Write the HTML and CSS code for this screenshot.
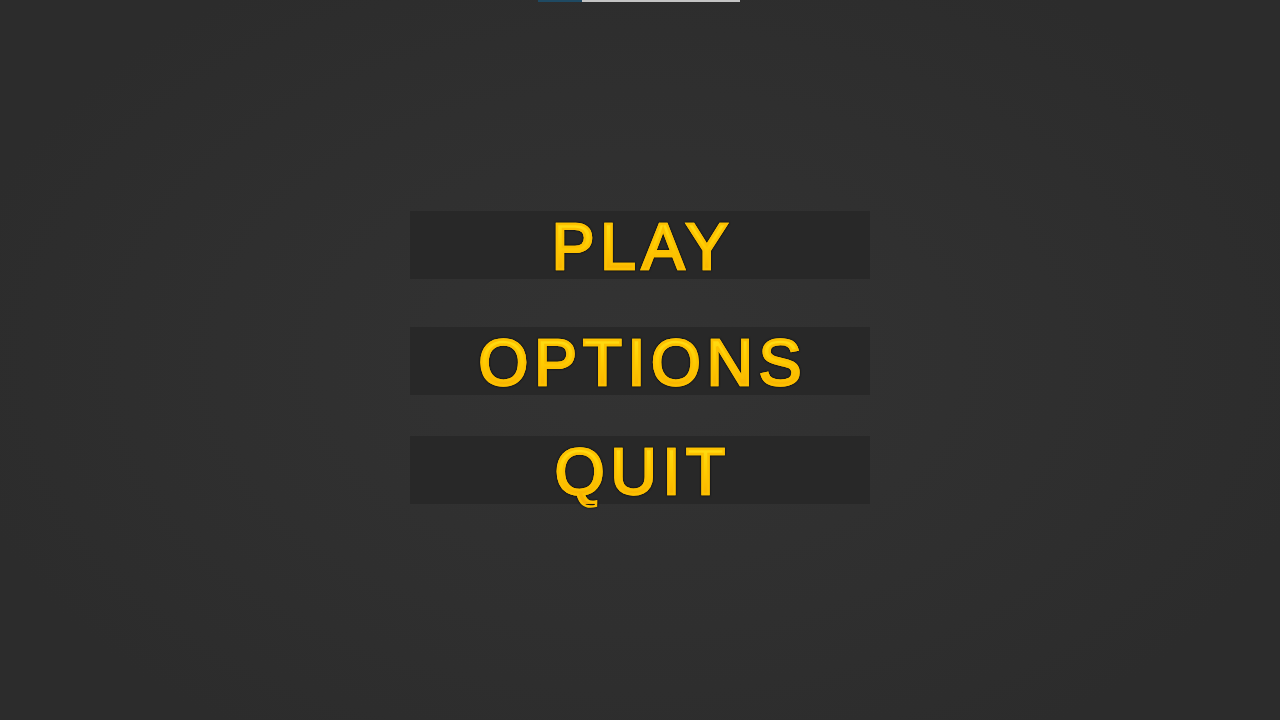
FILE: index.html
```html
<!DOCTYPE html>
<html>
<head>
<meta charset="utf-8">
<link rel="stylesheet" href="styles.css">
</head>
<body>
<div class="loader"><div class="loader-fill"></div><div class="loader-rest"></div></div>
<div class="menu">
  <div class="btn btn-play"><span class="label">PLAY</span></div>
  <div class="btn btn-options"><span class="label">OPTIONS</span></div>
  <div class="btn btn-quit"><span class="label">QUIT</span></div>
</div>
</body>
</html>
```
FILE: styles.css
```css
html, body {
  margin: 0;
  padding: 0;
  width: 1280px;
  height: 720px;
  overflow: hidden;
}
body {
  background: radial-gradient(ellipse 700px 450px at 640px 360px, #333333 0%, #2f2f2f 60%, #2c2c2c 100%);
  font-family: "Liberation Sans", Arial, sans-serif;
  display: flex;
  flex-direction: column;
}
.loader {
  display: flex;
  margin-left: 538px;
  width: 202px;
  height: 2px;
}
.loader-fill {
  width: 44px;
  background: #1f4a63;
}
.loader-rest {
  flex: 1;
  background: #c4c4c4;
}
.menu {
  display: flex;
  flex-direction: column;
  align-items: center;
  padding-top: 209px;
}
.btn {
  width: 460px;
  height: 68px;
  background: #282828;
  display: flex;
  align-items: center;
  justify-content: center;
}
.btn-options { margin-top: 48px; }
.btn-quit { margin-top: 41px; }
.label {
  font-size: 64px;
  font-weight: normal;
  letter-spacing: 5.8px;
  line-height: 1;
  background: linear-gradient(to bottom, #ffe41c 0%, #ffcc00 50%, #f6aa00 100%);
  -webkit-background-clip: text;
  background-clip: text;
  color: transparent;
  -webkit-text-stroke: 2.4px #fcc000;
  filter: drop-shadow(0 0 1.2px rgba(0,0,0,0.95));
  margin-right: -5.8px;
  padding-top: 3px;
}
```
